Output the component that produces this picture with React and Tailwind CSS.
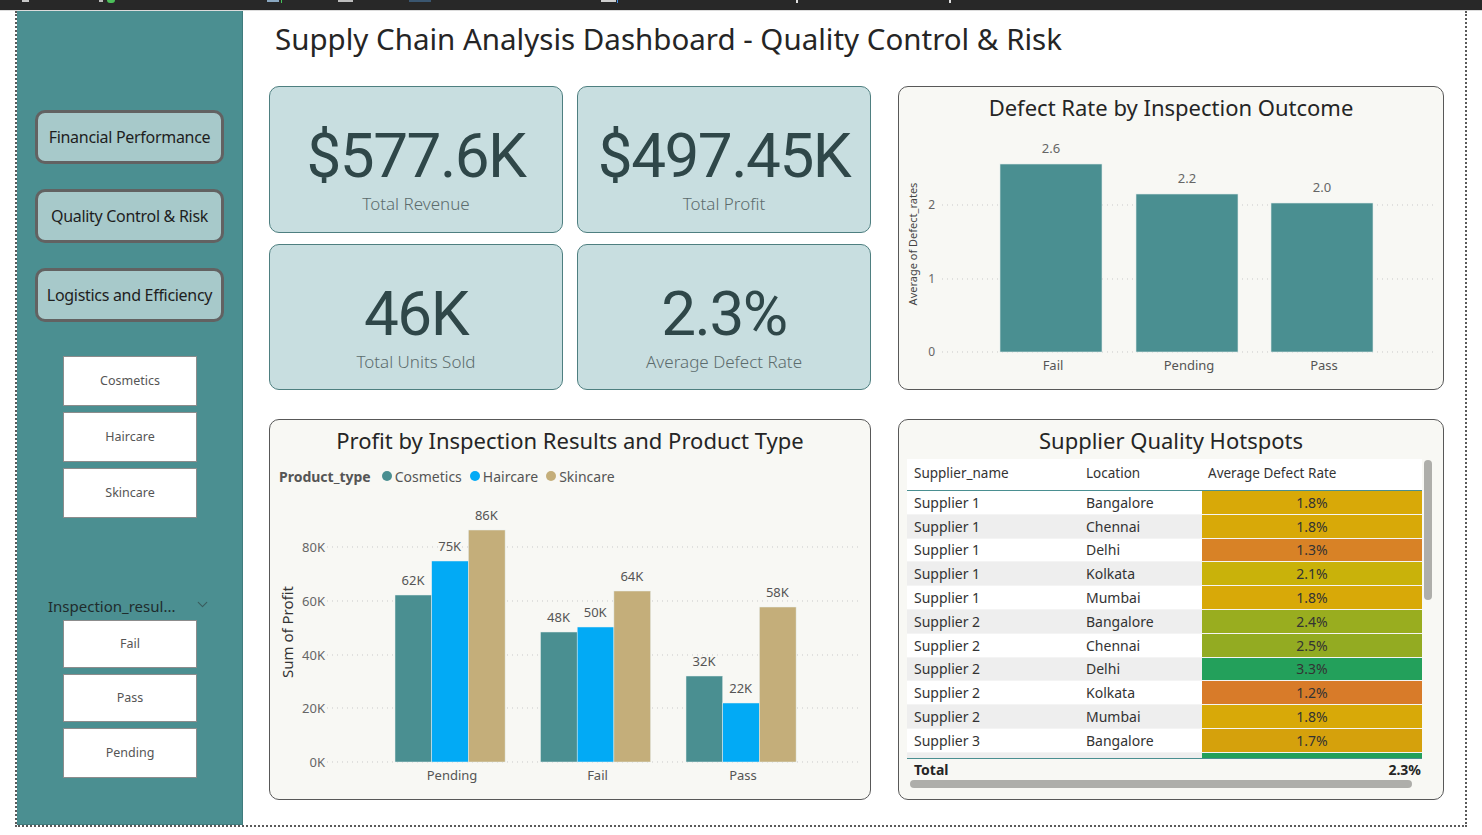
import React from 'react';
import { ChevronDown } from 'lucide-react';

const rows = [
  ['Supplier 1', 'Bangalore', '1.8%', 'bg-[#d8a908]'],
  ['Supplier 1', 'Chennai', '1.8%', 'bg-[#d8a908]'],
  ['Supplier 1', 'Delhi', '1.3%', 'bg-[#d88226]'],
  ['Supplier 1', 'Kolkata', '2.1%', 'bg-[#c9b20a]'],
  ['Supplier 1', 'Mumbai', '1.8%', 'bg-[#d8a908]'],
  ['Supplier 2', 'Bangalore', '2.4%', 'bg-[#99ad1f]'],
  ['Supplier 2', 'Chennai', '2.5%', 'bg-[#93ab22]'],
  ['Supplier 2', 'Delhi', '3.3%', 'bg-[#23a05b]'],
  ['Supplier 2', 'Kolkata', '1.2%', 'bg-[#d87b29]'],
  ['Supplier 2', 'Mumbai', '1.8%', 'bg-[#d8a908]'],
  ['Supplier 3', 'Bangalore', '1.7%', 'bg-[#d5a10c]'],
];

const kpis = [
  ['$577.6K', 'Total Revenue'],
  ['$497.45K', 'Total Profit'],
  ['46K', 'Total Units Sold'],
  ['2.3%', 'Average Defect Rate'],
];

// grouped profit bars, tops measured in svg coords (baseline 268)
const profitGroups = [
  { name: 'Pending', x: 125, bars: [[101, '62K'], [67, '75K'], [36, '86K']] },
  { name: 'Fail', x: 270.5, bars: [[138, '48K'], [133, '50K'], [97, '64K']] },
  { name: 'Pass', x: 416, bars: [[182, '32K'], [209, '22K'], [113, '58K']] },
];
const barColors = ['#4a8f91', '#02aaf5', '#c4ae7a'];

function NavButton({ label }) {
  return (
    <div className="w-[189px] h-[54px] ml-[18px] rounded-[10px] border-[3px] border-[#626262] bg-[#a7c9ca] flex items-center justify-center text-[16px] tracking-[-0.3px] text-[#1e1e1e]">
      {label}
    </div>
  );
}

function SlicerButton({ label, h = 'h-[50px]' }) {
  return (
    <div className={`w-[134px] ${h} ml-[46px] bg-white border border-[#8c8c8c] flex items-center justify-center text-[12.5px] text-[#555]`}>
      {label}
    </div>
  );
}

function DefectChart() {
  const bars = [
    { x: 101, top: 33, label: '2.6', name: 'Fail' },
    { x: 237, top: 63, label: '2.2', name: 'Pending' },
    { x: 372, top: 72, label: '2.0', name: 'Pass' },
  ];
  return (
    <svg width="543" height="257" className="block">
      <text x="18" y="113" transform="rotate(-90 18 113)" textAnchor="middle" fontSize="11" fill="#444">
        Average of Defect_rates
      </text>
      {[[74, '2'], [148, '1'], [221, '0']].map(([y, t]) => (
        <g key={t}>
          <line x1="43" x2="536" y1={y} y2={y} stroke="#c9c9c9" strokeDasharray="1 4" />
          <text x="36" y={y + 4} textAnchor="end" fontSize="12" fill="#666">{t}</text>
        </g>
      ))}
      {bars.map((b) => (
        <g key={b.name}>
          <rect x={b.x} y={b.top} width="102" height={221 - b.top} fill="#4a8f91" stroke="#dfeaea" strokeWidth="0.6" />
          <text x={b.x + 51} y={b.top - 11} textAnchor="middle" fontSize="13" fill="#666">{b.label}</text>
          <text x={b.x + 53} y={239} textAnchor="middle" fontSize="13" fill="#555">{b.name}</text>
        </g>
      ))}
    </svg>
  );
}

function ProfitChart() {
  return (
    <svg width="600" height="304" className="block">
      <text x="23" y="138" transform="rotate(-90 23 138)" textAnchor="middle" fontSize="15" fill="#333">
        Sum of Profit
      </text>
      {[[53, '80K'], [107, '60K'], [161, '40K'], [214, '20K'], [268, '0K']].map(([y, t]) => (
        <g key={t}>
          <line x1="57" x2="589" y1={y} y2={y} stroke="#c9c9c9" strokeDasharray="1 4" />
          <text x="55" y={y + 5} textAnchor="end" fontSize="13" fill="#666">{t}</text>
        </g>
      ))}
      {profitGroups.map((g) => (
        <g key={g.name}>
          {g.bars.map(([top, label], i) => (
            <g key={label}>
              <rect x={g.x + i * 36.7} y={top} width="36.7" height={268 - top} fill={barColors[i]} stroke="#e6eeee" strokeWidth="0.5" />
              <text x={g.x + i * 36.7 + 18} y={top - 10} textAnchor="middle" fontSize="13" fill="#555">{label}</text>
            </g>
          ))}
          <text x={g.x + 57} y={286} textAnchor="middle" fontSize="13" fill="#555">{g.name}</text>
        </g>
      ))}
    </svg>
  );
}

function SupplierTable() {
  return (
    <div className="ml-[8px] w-[525px] relative">
      <div className="flex">
        <div className="w-[515px] overflow-hidden">
          <div className="h-[32px] bg-white flex items-center pb-[3px] text-[13.5px] text-[#333] border-b border-[#4a8f91]">
            <div className="w-[173px] pl-[7px]">Supplier_name</div>
            <div className="w-[122px] pl-[6px]">Location</div>
            <div className="flex-1 pl-[6px]">Average Defect Rate</div>
          </div>
          <div className="h-[267px] overflow-hidden">
            {rows.map(([s, l, v, c], i) => (
              <div key={i} className={`h-[23.8px] flex items-center text-[14px] text-[#333] border-b border-[#f4f4f4] ${i % 2 ? 'bg-[#eeeeee]' : 'bg-white'}`}>
                <div className="w-[173px] pl-[7px]">{s}</div>
                <div className="w-[122px] pl-[6px]">{l}</div>
                <div className={`flex-1 h-full flex items-center justify-center ${c}`}>{v}</div>
              </div>
            ))}
            <div className="h-[24px] flex bg-[#eeeeee]">
              <div className="w-[295px]" />
              <div className="flex-1 bg-[#23a05b]" />
            </div>
          </div>
          <div className="h-[21px] border-t border-[#4a8f91] bg-[#f8f8f4] flex items-center justify-between text-[14px] font-bold text-[#252525]">
            <span className="pl-[7px]">Total</span>
            <span className="pr-[1px]">2.3%</span>
          </div>
        </div>
        <div className="w-[10px] pl-[2px] pt-[1px]">
          <div className="w-[8px] h-[140px] rounded-full bg-[#aeaeaa]" />
        </div>
      </div>
      <div className="mt-[1px] ml-[3px] w-[502px] h-[8px] rounded-full bg-[#aeaeaa]" />
    </div>
  );
}

export default function App() {
  return (
    <div className="w-[1482px] h-[835px] bg-white overflow-hidden font-['Noto_Sans','Open_Sans',sans-serif]">
      {/* window toolbar strip */}
      <div className="h-[11px] bg-[#282828] border-b border-[#dcdcdc] flex items-start">
        <div className="ml-[22px] w-[7px] h-[2px] bg-[#c8c8c8]" />
        <div className="ml-[70px] w-[4px] h-[2px] bg-[#bbbbbb]" />
        <div className="ml-[4px] w-[8px] h-[3px] rounded-b-full bg-[#4cc05a]" />
        <div className="ml-[152px] w-[12px] h-[2px] bg-[#8aa7c0]" />
        <div className="ml-[2px] w-[1px] h-[3px] bg-[#46c45a]" />
        <div className="ml-[56px] w-[15px] h-[2px] bg-[#bdbdbd]" />
        <div className="ml-[56px] w-[22px] h-[2px] bg-[#3a5670]" />
        <div className="ml-[170px] w-[15px] h-[2px] bg-[#cfcfcf]" />
        <div className="ml-[1px] w-[1px] h-[3px] bg-[#3c8ae8]" />
        <div className="ml-[178px] w-[2px] h-[3px] bg-[#e0e0e0]" />
        <div className="ml-[151px] w-[2px] h-[3px] bg-[#e0e0e0]" />
      </div>

      <div className="ml-[15px] w-[1452px] h-[816px] border-2 border-t-0 border-dotted border-[#5a5a5a] flex">
        {/* sidebar */}
        <div className="w-[226px] h-full bg-[#4b8f91] border-r border-b border-[#3f7b7d] flex flex-col">
          <div className="h-[99px]" />
          <NavButton label="Financial Performance" />
          <div className="h-[25px]" />
          <NavButton label="Quality Control & Risk" />
          <div className="h-[25px]" />
          <NavButton label="Logistics and Efficiency" />
          <div className="h-[34px]" />
          <div className="flex flex-col gap-[6px]">
            <SlicerButton label="Cosmetics" />
            <SlicerButton label="Haircare" />
            <SlicerButton label="Skincare" />
          </div>
          <div className="mt-[77px] h-[22px] flex items-center pl-[31px] text-[15px] text-[#1f2c2d]">
            <span className="w-[146px]">Inspection_resul...</span>
            <ChevronDown size={17} strokeWidth={1.5} className="text-[#3a5c5d] -mt-[4px]" />
          </div>
          <div className="mt-[3px] flex flex-col gap-[6px]">
            <SlicerButton label="Fail" h="h-[48px]" />
            <SlicerButton label="Pass" h="h-[48px]" />
            <SlicerButton label="Pending" h="h-[50px]" />
          </div>
        </div>

        {/* main */}
        <div className="flex-1 flex flex-col">
          <h1 className="mt-[8px] ml-[32px] h-[39px] text-[29.5px] leading-[39px] text-[#252525]">
            Supply Chain Analysis Dashboard - Quality Control &amp; Risk
          </h1>
          <div className="mt-[28px] ml-[26px] grid grid-cols-[602px_546px] grid-rows-[304px_381px] gap-x-[27px] gap-y-[29px]">
            <div className="grid grid-cols-[294px_294px] grid-rows-[147px_146px] gap-x-[14px] gap-y-[11px]">
              {kpis.map(([v, l]) => (
                <div key={l} className="rounded-[10px] border-[1.5px] border-[#4e7f80] bg-[#c8dee0] flex flex-col items-center">
                  <div className="mt-[36px] h-[66px] leading-[66px] text-[62px] tracking-[-1.5px] text-[#2f4749] font-['Roboto',sans-serif]">{v}</div>
                  <div className="mt-[3px] text-[17px] leading-[24px] text-[#5c6c6d] font-light">{l}</div>
                </div>
              ))}
            </div>

            <div className="rounded-[10px] border border-[#585858] bg-[#f8f8f4] overflow-hidden">
              <div className="h-[44px] flex justify-center pt-[2px] text-[22px] leading-[36px] text-[#252525]">
                Defect Rate by Inspection Outcome
              </div>
              <DefectChart />
            </div>

            <div className="rounded-[10px] border border-[#585858] bg-[#f8f8f4] overflow-hidden">
              <div className="h-[38px] flex items-center justify-center pt-[2px] text-[22px] text-[#252525]">
                Profit by Inspection Results and Product Type
              </div>
              <div className="h-[36px] flex items-center pl-[9px] text-[14px] text-[#555]">
                <span className="font-bold mr-[11px]">Product_type</span>
                <span className="w-[10px] h-[10px] rounded-full bg-[#4a8f91] mr-[3px]" />
                <span className="mr-[8px]">Cosmetics</span>
                <span className="w-[10px] h-[10px] rounded-full bg-[#02aaf5] mr-[3px]" />
                <span className="mr-[8px]">Haircare</span>
                <span className="w-[10px] h-[10px] rounded-full bg-[#c4ae7a] mr-[3px]" />
                <span>Skincare</span>
              </div>
              <ProfitChart />
            </div>

            <div className="rounded-[10px] border border-[#585858] bg-[#f8f8f4] overflow-hidden">
              <div className="h-[39px] flex items-center justify-center pt-[2px] text-[22px] text-[#252525]">
                Supplier Quality Hotspots
              </div>
              <SupplierTable />
            </div>
          </div>
        </div>
      </div>
    </div>
  );
}
